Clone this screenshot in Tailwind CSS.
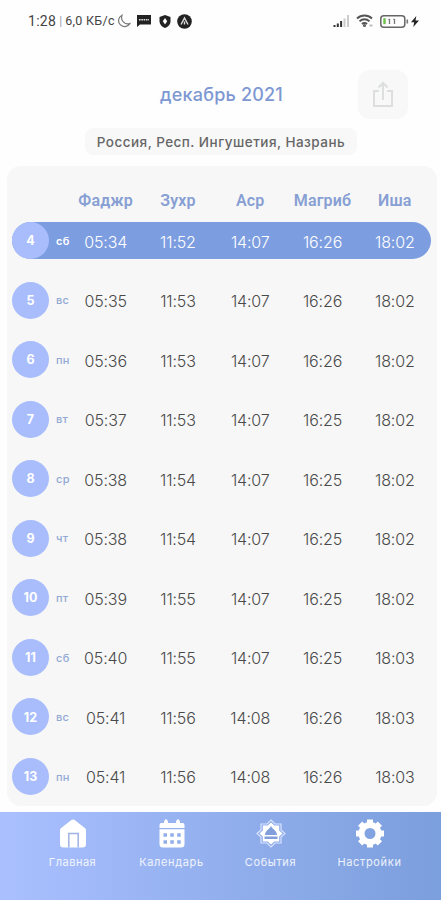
<!DOCTYPE html>
<html lang="ru">
<head>
    <meta charset="UTF-8">
    <meta name="viewport" content="width=device-width, initial-scale=1.0">
    <title>Календарь намазов</title>
    <script src="https://cdn.jsdelivr.net/npm/@tailwindcss/browser@4"></script>
</head>
<body class="bg-[#fefefe] h-[900px] overflow-hidden flex flex-col font-['Inter',sans-serif]">

    <!-- Status bar -->
    <div class="h-[42px] shrink-0 pl-[28px] pr-[22px] flex items-center justify-between text-[#444]">
        <div class="flex items-center font-['Roboto',sans-serif] whitespace-nowrap">
            <span class="text-[14px] tracking-[0.3px]">1:28</span>
            <span class="text-[12px] text-gray-400 mx-[3px]">|</span>
            <span class="text-[12.5px] w-[52px] tracking-[0.3px]">6,0 КБ/с</span>
            <svg class="w-[14px] h-[14px]" viewBox="0 0 14 14" fill="none" stroke="#777" stroke-width="1.2"><path d="M5 1.2A6 6 0 1 0 12.8 9.6 6.4 6.4 0 0 1 5 1.2z"/></svg>
            <svg class="w-[14px] h-[12px] ml-[6px]" viewBox="0 0 14 12"><path d="M0 0h14v9.500H3L0 12z" fill="#222"/><path d="M2 4.700h10" stroke="#ddd" stroke-width="1.600" stroke-dasharray="1.600 .7"/></svg>
            <svg class="w-[12px] h-[13px] ml-[8px]" viewBox="0 0 12 13"><path d="M6 0l5.500 2v4.500c0 3-2.500 5.300-5.500 6.500C3 11.800.5 9.500.5 6.500V2z" fill="#222"/><path d="M6 3l2.200 3.300L6 9.600 3.800 6.300z" fill="#fff"/></svg>
            <svg class="w-[15px] h-[15px] ml-[6px]" viewBox="0 0 15 15"><circle cx="7.500" cy="7.500" r="7.300" fill="#222"/><path d="M4 10.500L7.500 4l3.500 6.500M7.500 7.500v3" fill="none" stroke="#ddd" stroke-width="1.400"/></svg>
        </div>
        <div class="flex items-center">
            <svg class="w-[17px] h-[12px]" viewBox="0 0 17 12"><path d="M1.500 12v-2M4.800 12V8.500M8.100 12V6" stroke="#333" stroke-width="2"/><path d="M11.500 12V3.500M15 12V0" stroke="#ccc" stroke-width="2"/></svg>
            <svg class="w-[18px] h-[14px] ml-[6px]" viewBox="0 0 18 14" fill="none" stroke="#555" stroke-width="1.900"><path d="M1 4.500a11 11 0 0 1 15 0M3.500 7.300a7 7 0 0 1 10 0M6 10a3.500 3.500 0 0 1 5 0"/><circle cx="8.500" cy="11.500" r=".6"/><path d="M13.500 11.500h3" stroke="#bbb"/></svg>
            <svg class="w-[29px] h-[13px] ml-[6px]" viewBox="0 0 29 13" fill="none"><rect x=".8" y=".8" width="24" height="11.400" rx="3" stroke="#666" stroke-width="1.500"/><path d="M27.300 4.500v4" stroke="#777" stroke-width="1.600"/><path d="M4.500 3.200v6" stroke="#6cc04a" stroke-width="2.400"/><path d="M9.500 4v5M14.500 4v5" stroke="#777" stroke-width="1.300"/><path d="M8.300 4.300h1.500M13.300 4.300h1.500" stroke="#777"/></svg>
            <svg class="w-[8px] h-[11px] ml-[2px]" viewBox="0 0 8 11"><path d="M5.300 0L0 6.200h3.200L2.300 11 8 4.600H4.500z" fill="#222"/></svg>
        </div>
    </div>

    <!-- Month and share button -->
    <div class="h-[77px] shrink-0 pt-[28px] pr-[33px] flex justify-end">
        <h1 class="mr-[75px] text-[18px] leading-[24px] pt-[13px] font-medium text-[#7d98d3] whitespace-nowrap tracking-[0.2px]">декабрь 2021</h1>
        <button class="w-[50px] h-[49px] rounded-[12px] bg-[#f8f8f8] flex items-center justify-center">
            <svg class="w-[22px] h-[27px]" viewBox="0 0 22 27" fill="none" stroke="#dddfdf" stroke-width="2"><path d="M7 10H2v15h18V10h-5M11 19V2M6.500 6.500L11 2l4.500 4.500"/></svg>
        </button>
    </div>

    <!-- Location -->
    <div class="mt-[9px] h-[27px] shrink-0 w-[272px] ml-[85px] rounded-[8px] bg-[#f8f8f8] flex items-center justify-center text-[13.5px] font-medium tracking-[0.47px] text-[#666] whitespace-nowrap">
        <span class="pt-px">Россия, Респ. Ингушетия, Назрань</span>
    </div>

    <!-- Timetable -->
    <div class="mt-[11px] ml-[7px] w-[430px] h-[640px] shrink-0 rounded-[14px] bg-[#f7f7f7] pl-[5px] pt-[22px]">
        <div class="w-[419px] h-[25px] pt-px pl-[57.5px] grid grid-cols-5 items-center text-center font-['Roboto',sans-serif] font-semibold text-[16px] tracking-[0.15px] text-[#879fd3]">
            <span>Фаджр</span>
            <span>Зухр</span>
            <span>Аср</span>
            <span>Магриб</span>
            <span>Иша</span>
        </div>
        <div id="rows" class="mt-[9px] w-[419px] flex flex-col gap-[22.55px]"></div>
    </div>

    <!-- Bottom navigation -->
    <nav class="mt-[6px] h-[88px] shrink-0 pl-[23px] pr-[22px] pt-[6px] bg-gradient-to-r from-[#aac0ff] to-[#7b9edc] grid grid-cols-4 text-white/85 text-[11px] leading-[14px]">
        <a class="flex flex-col items-center gap-[6px]">
            <svg class="w-[32px] h-[31px]" viewBox="0 0 32 31"><path d="M16 1.500c.8 0 1.400.3 2 .8l9.500 7.500c1 .8 1.500 1.500 1.500 2.900V26c0 2.500-1 3.500-3.500 3.500h-19C4 29.500 3 28.500 3 26V12.700c0-1.400.5-2.100 1.500-2.900L14 2.300c.6-.5 1.200-.8 2-.8z" fill="#fff"/><path d="M11.800 29.500V15.500h9.400v14" fill="none" stroke="#9fb2e4" stroke-width="1.500"/></svg>
            <span class="tracking-[0.5px]">Главная</span>
        </a>
        <a class="flex flex-col items-center gap-[6px]">
            <svg class="w-[32px] h-[31px]" viewBox="0 0 32 31"><path d="M3.500 10V7.500C3.500 5.500 4.500 5 6 5h2c0-5 4-5 4 0h8c0-5 4-5 4 0h2c1.500 0 2.500.5 2.500 2.500V10z" fill="#fff"/><path d="M3.500 11.200h25V26c0 2.500-1 3.500-3.500 3.500H7c-2.500 0-3.500-1-3.500-3.500z" fill="#fff"/><path d="M7.500 17H11M14.300 17h3.500M21.200 17h3.500M7.500 24H11M14.300 24h3.500M21.200 24h3.500" stroke="#91aeea" stroke-width="3.500"/></svg>
            <span class="tracking-[0.65px]">Календарь</span>
        </a>
        <a class="flex flex-col items-center gap-[6px]">
            <svg class="w-[32px] h-[31px]" viewBox="0 0 32 31"><path d="M16 2l4 4h6v6l4 3.500-4 3.500v6h-6l-4 4-4-4H6v-6l-4-3.500L6 12V6h6z" fill="none" stroke="#d8e3ff" stroke-width="1.200"/><path d="M16 4.500l3.300 3h4.900v4.900l3.300 3.100-3.300 3.100v4.900h-4.900L16 26.500l-3.300-3H7.800v-4.900l-3.300-3.100 3.300-3.100V7.500h4.900z" fill="#fff"/><path d="M16 7.500c.5 3.500 6 4.800 6 9.500H10c0-4.700 5.500-6 6-9.500zM9.500 18.500h13v2.500h-13z" fill="#829fdc"/></svg>
            <span class="tracking-[0.6px]">События</span>
        </a>
        <a class="flex flex-col items-center gap-[6px]">
            <svg class="w-[32px] h-[31px]" viewBox="0 0 32 31"><circle cx="16" cy="15.500" r="8.500" fill="none" stroke="#fff" stroke-width="6"/><path d="M16 1.500v4M16 25.500v4M2 15.500h4M26 15.500h4M6.100 5.600l3 3M22.900 22.400l3 3M6.100 25.400l3-3M22.900 8.600l3-3" stroke="#fff" stroke-width="6"/></svg>
            <span class="tracking-[0.65px]">Настройки</span>
        </a>
    </nav>

    <script>
        const days = [
            [4, 'сб', '05:34', '11:52', '14:07', '16:26', '18:02'],
            [5, 'вс', '05:35', '11:53', '14:07', '16:26', '18:02'],
            [6, 'пн', '05:36', '11:53', '14:07', '16:26', '18:02'],
            [7, 'вт', '05:37', '11:53', '14:07', '16:25', '18:02'],
            [8, 'ср', '05:38', '11:54', '14:07', '16:25', '18:02'],
            [9, 'чт', '05:38', '11:54', '14:07', '16:25', '18:02'],
            [10, 'пт', '05:39', '11:55', '14:07', '16:25', '18:02'],
            [11, 'сб', '05:40', '11:55', '14:07', '16:25', '18:03'],
            [12, 'вс', '05:41', '11:56', '14:08', '16:26', '18:03'],
            [13, 'пн', '05:41', '11:56', '14:08', '16:26', '18:03']
        ];

        // The first row is today
        document.getElementById('rows').innerHTML = days.map(([day, week, ...times], i) => `
            <div class="h-[37px] rounded-full grid grid-cols-[37px_20.5px_repeat(5,1fr)] items-center ${i === 0 ? 'bg-[#7c9de0] text-white' : 'text-[#4a4a4a]'}">
                <span class="h-[37px] pt-[2px] rounded-full bg-[#a9bdfc] text-white text-[12.5px] font-bold flex items-center justify-center">${day}</span>
                <span class="pl-[7px] pt-px text-[11px] tracking-[0.3px] ${i === 0 ? 'font-semibold' : 'font-medium text-[#93a9d4]'}">${week}</span>
                ${times.map(t => `<span class="text-center text-[16px] tracking-[-0.15px] font-light pt-[2px]">${t}</span>`).join('')}
            </div>
        `).join('');
    </script>

</body>
</html>
